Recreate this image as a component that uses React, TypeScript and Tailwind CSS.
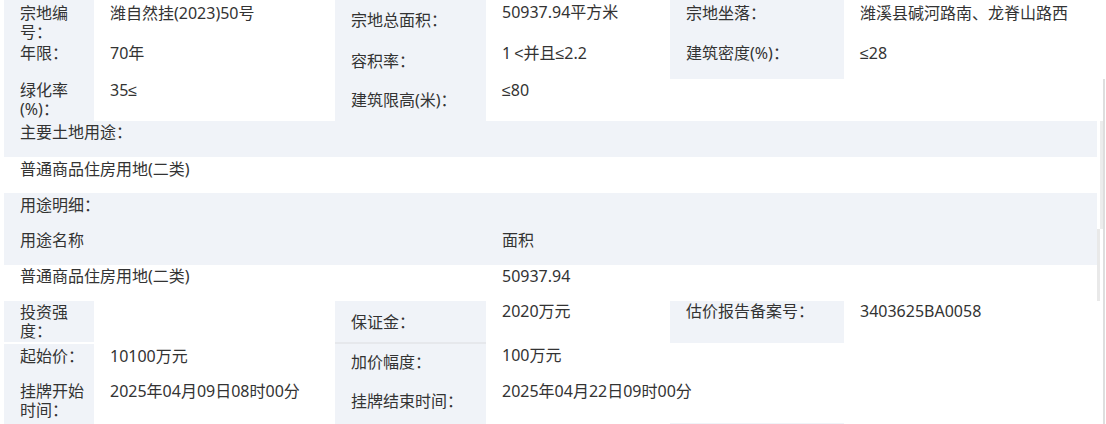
import React from "react";

const LB = "shrink-0 bg-[#f0f3f8]";

function Le() {
  return <span className="font-['Liberation_Sans',sans-serif]">≤</span>;
}

export default function App() {
  return (
    <div className="flex w-[1106px] h-[424px] overflow-hidden bg-white text-[16px] leading-[19px] text-[#333333] font-['Noto_Sans','Noto_Sans_CJK_SC',sans-serif]">
      <div className="flex w-[1097px] flex-col pl-1">
        {/* top section */}
        <div className="flex h-[121px]">
          {/* group 1 */}
          <div className="flex w-[331px] flex-col">
            <div className="flex h-[40px]">
              <div className={`w-[90px] ${LB} pl-4 pt-[3.5px]`}>宗地编号：</div>
              <div className="min-w-0 flex-1 whitespace-nowrap pl-4 pt-[3.5px]">潍自然挂(2023)50号</div>
            </div>
            <div className="flex h-[37px]">
              <div className={`w-[90px] ${LB} pl-4 pt-[3.5px]`}>年限：</div>
              <div className="min-w-0 flex-1 whitespace-nowrap pl-4 pt-[3.5px]">70年</div>
            </div>
            <div className="flex h-[44px]">
              <div className={`w-[90px] ${LB} pl-4 pt-[3.5px]`}>绿化率(%)：</div>
              <div className="min-w-0 flex-1 whitespace-nowrap pl-4 pt-[3.5px]">35<Le /></div>
            </div>
          </div>
          {/* group 2 */}
          <div className="flex w-[335px] flex-col">
            <div className="flex h-[40px]">
              <div className={`w-[151px] ${LB} pl-4 pt-[10.5px]`}>宗地总面积：</div>
              <div className="min-w-0 flex-1 whitespace-nowrap pl-4 pt-[2.5px]">50937.94平方米</div>
            </div>
            <div className="flex h-[37px]">
              <div className={`w-[151px] ${LB} pl-4 pt-[11.5px]`}>容积率：</div>
              <div className="min-w-0 flex-1 whitespace-nowrap pl-4 pt-[3.5px]">1<span className="ml-[3px] font-['Liberation_Sans',sans-serif]">&lt;</span>并且<Le />2.2</div>
            </div>
            <div className="flex h-[44px]">
              <div className={`w-[151px] ${LB} pl-4 pt-[13.5px]`}>建筑限高(米)：</div>
              <div className="min-w-0 flex-1 whitespace-nowrap pl-4 pt-[3.5px]"><Le />80</div>
            </div>
          </div>
          {/* group 3 */}
          <div className="flex w-[427px] flex-col">
            <div className="flex h-[40px]">
              <div className={`w-[174px] ${LB} pl-4 pt-[3.5px]`}>宗地坐落：</div>
              <div className="min-w-0 flex-1 whitespace-nowrap pl-4 pt-[3.5px]">潍溪县碱河路南、龙脊山路西</div>
            </div>
            <div className="flex h-[39px]">
              <div className={`w-[174px] ${LB} pl-4 pt-[3.5px]`}>建筑密度(%)：</div>
              <div className="min-w-0 flex-1 whitespace-nowrap pl-4 pt-[3.5px]"><Le />28</div>
            </div>
          </div>
        </div>

        {/* middle section */}
        <div className={`h-9 ${LB} pl-4 pt-[2px]`}>主要土地用途：</div>
        <div className="h-9 pl-4 pt-[2.5px]">普通商品住房用地(二类)</div>
        <div className={`flex h-[72px] flex-col ${LB}`}>
          <div className="h-9 pl-4 pt-[2.5px]">用途明细：</div>
          <div className="flex h-9 pt-[1.5px]">
            <div className="w-[482px] shrink-0 pl-4">用途名称</div>
            <div className="flex-1 pl-4">面积</div>
          </div>
        </div>
        <div className="flex h-9 pt-[1.5px]">
          <div className="w-[482px] shrink-0 pl-4">普通商品住房用地(二类)</div>
          <div className="flex-1 pl-4">50937.94</div>
        </div>

        {/* bottom section */}
        <div className="flex h-[123px]">
          {/* group 1 */}
          <div className="flex w-[331px] flex-col">
            <div className="flex h-[43px]">
              <div className="flex w-[90px] shrink-0 flex-col">
                <div className={`h-[41px] ${LB} pl-4 pt-[2px]`}>投资强度：</div>
              </div>
              <div className="min-w-0 flex-1 pl-4 pt-[1px]"></div>
            </div>
            <div className="flex h-9">
              <div className={`w-[90px] ${LB} pl-4 pt-[2.5px]`}>起始价：</div>
              <div className="min-w-0 flex-1 whitespace-nowrap pl-4 pt-[2.5px]">10100万元</div>
            </div>
            <div className="flex h-[44px]">
              <div className={`w-[90px] ${LB} pl-4 pt-[2px]`}>挂牌开始时间：</div>
              <div className="min-w-0 flex-1 whitespace-nowrap pl-4 pt-[2px]">2025年04月09日08时00分</div>
            </div>
          </div>
          {/* group 2 */}
          <div className="flex w-[335px] flex-col">
            <div className="flex h-[43px]">
              <div className="flex w-[151px] shrink-0 flex-col">
                <div className={`h-[41px] ${LB} pl-4 pt-[11.5px]`}>保证金：</div>
                <div className="h-[2px] bg-[#e6e8ec]"></div>
              </div>
              <div className="min-w-0 flex-1 whitespace-nowrap pl-4 pt-[1px]">2020万元</div>
            </div>
            <div className="flex h-9">
              <div className={`w-[151px] ${LB} pl-4 pt-[9px]`}>加价幅度：</div>
              <div className="min-w-0 flex-1 whitespace-nowrap pl-4 pt-[1.5px]">100万元</div>
            </div>
            <div className="flex h-[44px]">
              <div className={`w-[151px] ${LB} pl-4 pt-[12px]`}>挂牌结束时间：</div>
              <div className="min-w-0 flex-1 whitespace-nowrap pl-4 pt-[2px]">2025年04月22日09时00分</div>
            </div>
          </div>
          {/* group 3 */}
          <div className="flex w-[427px] flex-col">
            <div className="flex h-[43px]">
              <div className="flex w-[174px] shrink-0 flex-col">
                <div className={`h-[42px] ${LB} pl-4 pt-[1px]`}>估价报告备案号：</div>
              </div>
              <div className="min-w-0 flex-1 whitespace-nowrap pl-4 pt-[1px]">3403625BA0058</div>
            </div>
            <div className="h-[79px]"></div>
            <div className="flex h-[1px]">
              <div className={`w-[174px] ${LB}`}></div>
            </div>
          </div>
        </div>
      </div>

      {/* right scroll edges */}
      <div className="flex w-[9px]">
        <div className="flex w-[3px] flex-col">
          <div className="h-[229px]"></div>
          <div className="h-[72px] bg-[#e9e9e9]"></div>
        </div>
        <div className="flex w-[3px] flex-col">
          <div className="h-[121px]"></div>
          <div className="h-[108px] bg-[#ececec]"></div>
        </div>
        <div className="flex w-[2px] flex-col">
          <div className="h-[79px]"></div>
          <div className="flex-1 bg-[#dedede]"></div>
        </div>
      </div>
    </div>
  );
}
